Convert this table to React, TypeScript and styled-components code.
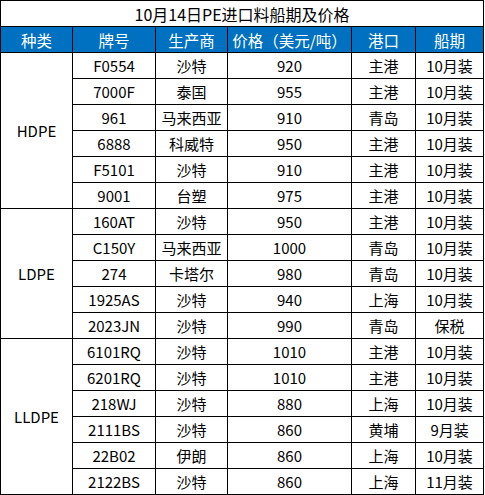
import styled, { createGlobalStyle } from 'styled-components'

interface Row {
	grade: string
	maker: string
	price: number
	port: string
	ship: string
}

interface Group {
	kind: string
	rows: Row[]
}

const groups: Group[] = [
	{
		kind: 'HDPE',
		rows: [
			{ grade: 'F0554', maker: '沙特', price: 920, port: '主港', ship: '10月装' },
			{ grade: '7000F', maker: '泰国', price: 955, port: '主港', ship: '10月装' },
			{ grade: '961', maker: '马来西亚', price: 910, port: '青岛', ship: '10月装' },
			{ grade: '6888', maker: '科威特', price: 950, port: '主港', ship: '10月装' },
			{ grade: 'F5101', maker: '沙特', price: 910, port: '主港', ship: '10月装' },
			{ grade: '9001', maker: '台塑', price: 975, port: '主港', ship: '10月装' },
		],
	},
	{
		kind: 'LDPE',
		rows: [
			{ grade: '160AT', maker: '沙特', price: 950, port: '主港', ship: '10月装' },
			{ grade: 'C150Y', maker: '马来西亚', price: 1000, port: '青岛', ship: '10月装' },
			{ grade: '274', maker: '卡塔尔', price: 980, port: '青岛', ship: '10月装' },
			{ grade: '1925AS', maker: '沙特', price: 940, port: '上海', ship: '10月装' },
			{ grade: '2023JN', maker: '沙特', price: 990, port: '青岛', ship: '保税' },
		],
	},
	{
		kind: 'LLDPE',
		rows: [
			{ grade: '6101RQ', maker: '沙特', price: 1010, port: '主港', ship: '10月装' },
			{ grade: '6201RQ', maker: '沙特', price: 1010, port: '主港', ship: '10月装' },
			{ grade: '218WJ', maker: '沙特', price: 880, port: '上海', ship: '10月装' },
			{ grade: '2111BS', maker: '沙特', price: 860, port: '黄埔', ship: '9月装' },
			{ grade: '22B02', maker: '伊朗', price: 860, port: '上海', ship: '10月装' },
			{ grade: '2122BS', maker: '沙特', price: 860, port: '上海', ship: '11月装' },
		],
	},
]

const columns = [
	{ title: '种类', width: 72 },
	{ title: '牌号', width: 83 },
	{ title: '生产商', width: 72 },
	{ title: '价格（美元/吨）', width: 124 },
	{ title: '港口', width: 64 },
	{ title: '船期', width: 68 },
]

export default function App() {
	return (
		<>
			<GlobalStyle />
			<Sheet>
				<colgroup>
					{columns.map((c) => (
						<col key={c.title} style={{ width: c.width }} />
					))}
				</colgroup>
				<tbody>
					{/* Title */}
					<Line>
						<TitleCell colSpan={6}>10月14日PE进口料船期及价格</TitleCell>
					</Line>

					{/* Header */}
					<Line>
						{columns.map((c) => (
							<HeadCell key={c.title}>{c.title}</HeadCell>
						))}
					</Line>

					{/* Data */}
					{groups.map((g) =>
						g.rows.map((r, i) => (
							<Line key={g.kind + r.grade}>
								{i === 0 && <Cell rowSpan={g.rows.length}>{g.kind}</Cell>}
								<Cell>{r.grade}</Cell>
								<Cell>{r.maker}</Cell>
								<Cell>{r.price}</Cell>
								<Cell>{r.port}</Cell>
								<Cell>{r.ship}</Cell>
							</Line>
						))
					)}
				</tbody>
			</Sheet>
		</>
	)
}

const GlobalStyle = createGlobalStyle`
	body {
		margin: 0;
		background: #ffffff;
		font-family: 'Noto Sans CJK SC', 'Noto Sans', sans-serif;
	}
`

const Sheet = styled.table`
	border-collapse: collapse;
	table-layout: fixed;
	width: 484px;
	margin: 0;
	font-size: 15px;
	color: #000000;
`

const Line = styled.tr`
	height: 26px;
`

const Cell = styled.td`
	border: 1px solid #000000;
	padding: 0;
	text-align: center;
	vertical-align: middle;
	line-height: 18px;
	white-space: nowrap;
	overflow: hidden;
`

const TitleCell = styled(Cell)`
	font-size: 16px;
`

const HeadCell = styled(Cell)`
	background: #0070c0;
	color: #ffffff;
	font-size: 15.5px;
`
